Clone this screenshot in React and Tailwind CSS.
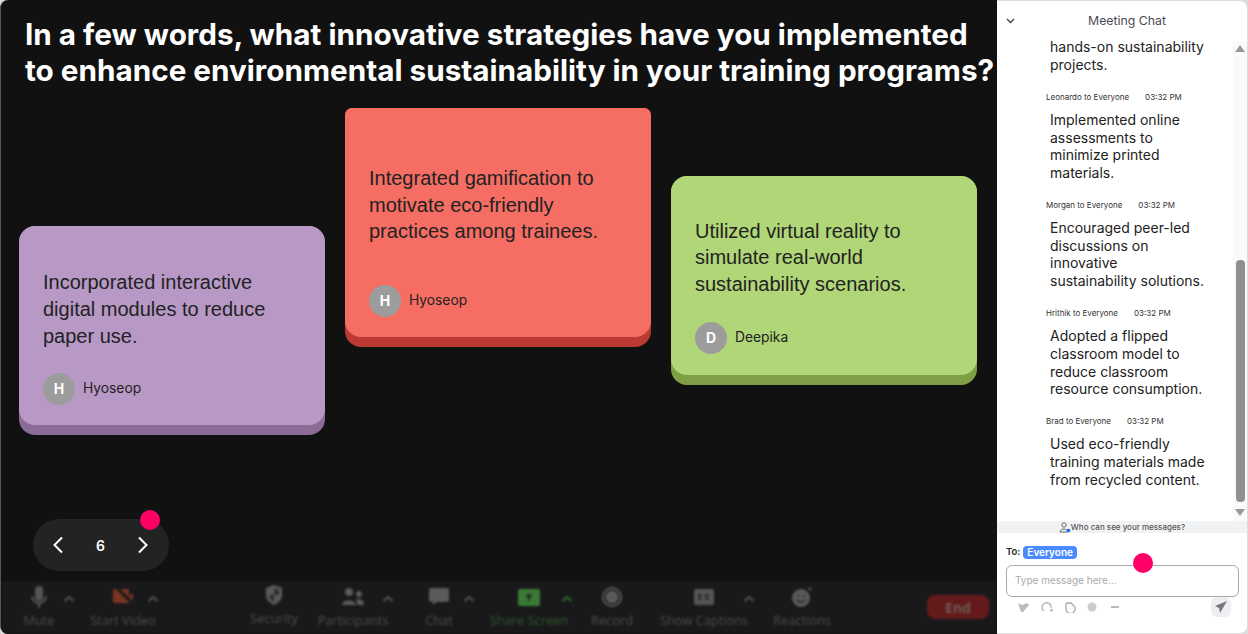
import React from 'react'

const cards = [
  { text: 'Incorporated interactive digital modules to reduce paper use.', name: 'Hyoseop', wrap: 'mt-[118px] bg-[#8a6c96] rounded-[16px]', face: 'bg-[#b899c6] rounded-[16px]', top: 'pt-[43.4px] h-[199px]', gap: 'mt-[23.6px]' },
  { text: 'Integrated gamification to motivate eco-friendly practices among trainees.', name: 'Hyoseop', wrap: 'mt-0 bg-[#bb3a31] rounded-b-[16px] rounded-t-[7px]', face: 'bg-[#f56d63] rounded-b-[16px] rounded-t-[7px]', top: 'pt-[57px] h-[229px]', gap: 'mt-[40px]' },
  { text: 'Utilized virtual reality to simulate real-world sustainability scenarios.', name: 'Deepika', wrap: 'mt-[67.5px] bg-[#7f9f47] rounded-[16px]', face: 'bg-[#b0d677] rounded-[16px]', top: 'pt-[42.4px] h-[199px]', gap: 'mt-[24px]' },
]

const messages = [
  { from: 'Leonardo to Everyone', text: ['Implemented online', 'assessments to', 'minimize printed', 'materials.'] },
  { from: 'Morgan to Everyone', text: ['Encouraged peer-led', 'discussions on', 'innovative', 'sustainability solutions.'] },
  { from: 'Hrithik to Everyone', text: ['Adopted a flipped', 'classroom model to', 'reduce classroom', 'resource consumption.'] },
  { from: 'Brad to Everyone', text: ['Used eco-friendly', 'training materials made', 'from recycled content.'] },
]

function Card({ card }) {
  return (
    <div className={`w-[306px] shrink-0 pb-[10px] ${card.wrap}`}>
      <div className={`pl-6 pr-6 ${card.face} ${card.top}`}>
        <p className="text-[20px] leading-[26.6px] text-[#222]">{card.text}</p>
        <div className={`flex items-center gap-2 ${card.gap}`}>
          <div className="flex h-8 w-8 items-center justify-center rounded-full bg-[#9c9c9c] text-[14px] font-bold text-white font-['Inter']">
            {card.name[0]}
          </div>
          <span className="text-[13.8px] text-[#222] font-['Inter']">{card.name}</span>
        </div>
      </div>
    </div>
  )
}

function Caret({ className, color = '#555' }) {
  return (
    <svg className={`absolute top-[11px] ${className}`} width="12" height="8" viewBox="0 0 12 8" fill="none">
      <path d="M1.5 6 L6 2 L10.5 6" stroke={color} strokeWidth="2" />
    </svg>
  )
}

function Tool({ label, className, children, labelColor = 'text-[#4d4d4f]' }) {
  return (
    <div className={`relative flex shrink-0 flex-col items-center ${className}`}>
      <div className="flex h-[26px] items-center justify-center">{children}</div>
      <span className={`mt-[2px] whitespace-nowrap text-[12.8px] leading-4 ${labelColor}`}>{label}</span>
    </div>
  )
}

function Toolbar() {
  return (
    <div className="flex h-[53px] bg-[#19191b] pt-[3px] font-['Open_Sans'] blur-[1px]">
      <Tool label="Mute" className="ml-2 w-[60px]">
        <svg width="18" height="24" viewBox="0 0 18 24" fill="#555">
          <rect x="5" y="1" width="8" height="15" rx="4" />
          <path d="M2 11 a7 7 0 0 0 14 0 M9 18 v5" fill="none" stroke="#555" strokeWidth="2" />
        </svg>
        <Caret className="left-[54px]" />
      </Tool>
      <Tool label="Start Video" className="ml-3 w-[84px]">
        <svg width="22" height="20" viewBox="0 0 22 20" fill="#7a3420">
          <path d="M1 2 L4 2 L18 16 L3 16 Q1 16 1 14 Z M8 2 L16 2 Q17 2 17 4 L17 9 L21 6 L21 14 Z" />
        </svg>
        <Caret className="left-[66px]" />
      </Tool>
      <Tool label="Security" className="ml-[79px] w-[60px] -mt-[2px]">
        <svg width="20" height="22" viewBox="0 0 20 22" fill="#5a5a5a">
          <path d="M10 1 L18 4 V11 C18 16 14 19 10 21 C6 19 2 16 2 11 V4 Z" />
          <path d="M10 4 L15 6 V11 H10 Z M10 11 H5 C5 14 8 17 10 18 Z" fill="#2e2e30" />
        </svg>
      </Tool>
      <Tool label="Participants" className="ml-[7px] w-[84px]">
        <svg width="24" height="20" viewBox="0 0 24 20" fill="#5a5a5a">
          <circle cx="8" cy="5" r="4" />
          <circle cx="18" cy="7" r="3" />
          <path d="M1 18 C1 12 15 12 15 18 Z M16 18 C16 15 16 13 15 12 C19 11 23 13 23 18 Z" />
        </svg>
        <Caret className="left-[71px]" />
      </Tool>
      <Tool label="Chat" className="ml-[14px] w-[60px]">
        <svg width="22" height="20" viewBox="0 0 22 20" fill="#5a5a5a">
          <path d="M3 1 H19 Q21 1 21 3 V13 Q21 15 19 15 H9 L5 18 V15 H3 Q1 15 1 13 V3 Q1 1 3 1 Z" />
        </svg>
        <Caret className="left-[54px]" />
      </Tool>
      <Tool label="Share Screen" className="ml-[15px] w-[90px]" labelColor="text-[#2c5a2c]">
        <svg width="22" height="17" viewBox="0 0 22 17">
          <rect width="22" height="17" rx="2" fill="#3a7a34" />
          <path d="M11 4 L7 8 H10 V12 H12 V8 H15 Z" fill="#1c2e1c" />
        </svg>
        <Caret className="left-[77px]" color="#2f6a2b" />
      </Tool>
      <Tool label="Record" className="ml-2 w-[60px]">
        <svg width="20" height="20" viewBox="0 0 20 20">
          <circle cx="10" cy="10" r="9" fill="none" stroke="#5a5a5a" strokeWidth="2" />
          <circle cx="10" cy="10" r="6.5" fill="#5a5a5a" />
        </svg>
      </Tool>
      <Tool label="Show Captions" className="ml-3 w-[100px]">
        <svg width="20" height="16" viewBox="0 0 20 16">
          <rect width="20" height="16" rx="2" fill="#555" />
          <path d="M8 6 H5 V10 H8 M15 6 H12 V10 H15" fill="none" stroke="#222" strokeWidth="1.5" />
        </svg>
        <Caret className="left-[89px]" />
      </Tool>
      <Tool label="Reactions" className="ml-2 w-[80px]">
        <svg width="22" height="22" viewBox="0 0 22 22">
          <circle cx="10" cy="12" r="9" fill="#5a5a5a" />
          <circle cx="7" cy="10" r="1" fill="#222" />
          <circle cx="13" cy="10" r="1" fill="#222" />
          <path d="M6 14 Q10 18 14 14" fill="none" stroke="#222" strokeWidth="1.2" />
          <circle cx="19" cy="3" r="1.5" fill="#5a5a5a" />
        </svg>
      </Tool>
      <div className="ml-[85px] mt-[11px] flex h-6 w-[62px] items-center justify-center rounded-lg bg-[#641a1a] text-[14px] font-bold text-[#6d5a5a]">
        End
      </div>
    </div>
  )
}

function Stage() {
  return (
    <div className="relative flex h-[634px] w-[997px] shrink-0 flex-col overflow-hidden rounded-l-lg bg-[#111] border-l border-[#555]">
      <h1 className="h-[107px] shrink-0 whitespace-nowrap pl-6 pt-[16px] text-[29.7px] font-bold leading-[36px] text-white font-['Inter']">
        In a few words, what innovative strategies have you implemented
        <br />
        to enhance environmental sustainability in your training programs?
      </h1>
      <div className="flex flex-1 items-start gap-5 pl-[18px] pt-[1px] font-['Liberation_Sans']">
        {cards.map((c) => (
          <Card key={c.text} card={c} />
        ))}
      </div>
      <div className="relative mb-[10px] ml-8 flex h-[52px] w-[136px] items-center justify-between rounded-full bg-[#232323] pl-[19px] pr-[20px]">
        <svg width="12" height="18" viewBox="0 0 12 18" fill="none">
          <path d="M10 1.5 L2.5 9 L10 16.5" stroke="#fff" strokeWidth="2" />
        </svg>
        <span className="text-[14px] font-semibold text-white font-['Inter']">6</span>
        <svg width="12" height="18" viewBox="0 0 12 18" fill="none">
          <path d="M2 1.5 L9.5 9 L2 16.5" stroke="#fff" strokeWidth="2" />
        </svg>
        <div className="absolute -top-[9px] left-[107px] h-5 w-5 rounded-full bg-[#ff0066]" />
      </div>
      <Toolbar />
    </div>
  )
}

function ChatPanel() {
  return (
    <div className="relative flex h-[634px] flex-1 flex-col rounded-r-lg border-y border-r border-[#ddd] bg-white font-['Inter']">
      <div className="relative flex h-[30px] shrink-0 items-start justify-center pl-[10px] pt-[11px] text-[12.3px] leading-[18px] text-[#4a4a55]">
        <svg className="absolute left-[9px] top-[17px]" width="9" height="6" viewBox="0 0 9 6" fill="none">
          <path d="M1 1 L4.5 4.5 L8 1" stroke="#444" strokeWidth="1.4" />
        </svg>
        Meeting Chat
      </div>
      <div className="relative flex-1 overflow-hidden pl-[53px] pt-[7px]">
        <p className="text-[14px] leading-[18px] text-[#222]">
          hands-on sustainability
          <br />
          projects.
        </p>
        {messages.map((m) => (
          <div key={m.from} className="mt-[16.4px]">
            <div className="-ml-[4px] flex h-[13px] items-center gap-4 text-[8px] text-[#333]">
              <span>{m.from}</span>
              <span>03:32 PM</span>
            </div>
            <p className="mt-[7.3px] text-[14px] leading-[17.85px] text-[#222]">
              {m.text.map((line) => (
                <span key={line} className="block whitespace-nowrap">
                  {line}
                </span>
              ))}
            </p>
          </div>
        ))}
        {/* scrollbar */}
        <div className="absolute bottom-0 right-0 top-[10px] w-[14px] bg-[#fafafa]">
          <div className="absolute left-[2px] top-[4px] h-0 w-0 border-x-[5px] border-b-[7px] border-x-transparent border-b-[#9a9a9a]" />
          <div className="absolute left-[3px] top-[219px] h-[242px] w-[9px] rounded-sm bg-[#8f8f8f]" />
          <div className="absolute left-[2px] top-[468px] h-0 w-0 border-x-[5px] border-t-[7px] border-x-transparent border-t-[#9a9a9a]" />
        </div>
      </div>
      <div className="flex h-3 shrink-0 items-center justify-center bg-[#f1f2f4] text-[8px] font-medium text-[#555]">
        <svg width="12" height="11" viewBox="0 0 12 11" fill="none">
          <circle cx="5" cy="3" r="2.2" stroke="#666" />
          <path d="M1 10 C1 6 9 6 9 10 Z" stroke="#666" />
          <circle cx="9.5" cy="8.5" r="1.8" fill="#0b6cff" />
        </svg>
        Who can see your messages?
      </div>
      <div className="relative h-[100px] shrink-0 pl-[9px] pr-2 pt-3">
        <div className="flex items-center gap-[3px] text-[9.5px] font-semibold text-[#222]">
          To:
          <span className="rounded-[4px] bg-[#4a8cff] px-1 text-[10px] leading-[13px] text-white">Everyone</span>
        </div>
        <div className="mt-[6px] flex h-8 w-[233px] items-center rounded-md border border-[#aaa] px-[8px] pb-[2px] text-[10px] text-[#aaa]">
          Type message here...
        </div>
        <div className="flex h-[20px] items-center gap-[11px] pl-[11px]">
          <svg width="13" height="11" viewBox="0 0 13 11" fill="#bbb"><path d="M1 1 L5 3 L10 1 L12 3 L6 10 H4 Z" /></svg>
          <svg width="12" height="12" viewBox="0 0 12 12" fill="none"><path d="M3 10 A4.5 4.5 0 1 1 10 7 M9 9 H12 M10.5 8 V11" stroke="#bbb" strokeWidth="1.4" /></svg>
          <svg width="12" height="12" viewBox="0 0 12 12" fill="none"><path d="M3 2 H7 L11 6 V8 A3.5 3.5 0 0 1 2 8 V3 Z" stroke="#aaa" strokeWidth="1.4" /></svg>
          <svg width="10" height="10" viewBox="0 0 10 10" fill="#ccc"><circle cx="5" cy="5" r="4.5" /></svg>
          <svg width="10" height="10" viewBox="0 0 10 10" fill="#bbb" className="ml-[2px]"><rect x="1" y="4" width="8" height="2" /></svg>
        </div>
        <div className="absolute bottom-[16px] right-[16px] flex h-5 w-5 items-center justify-center rounded-md bg-[#eeeef2]">
          <svg width="14" height="14" viewBox="0 0 14 14" fill="#777"><path d="M13 1 L1 6 L5 8 L6 13 Z" /></svg>
        </div>
        <div className="absolute left-[136px] top-[20px] h-5 w-5 rounded-full bg-[#ff0066]" />
      </div>
    </div>
  )
}

export default function App() {
  return (
    <div className="flex h-[634px] w-[1248px] overflow-hidden bg-[#ddd]">
      <Stage />
      <ChatPanel />
    </div>
  )
}
